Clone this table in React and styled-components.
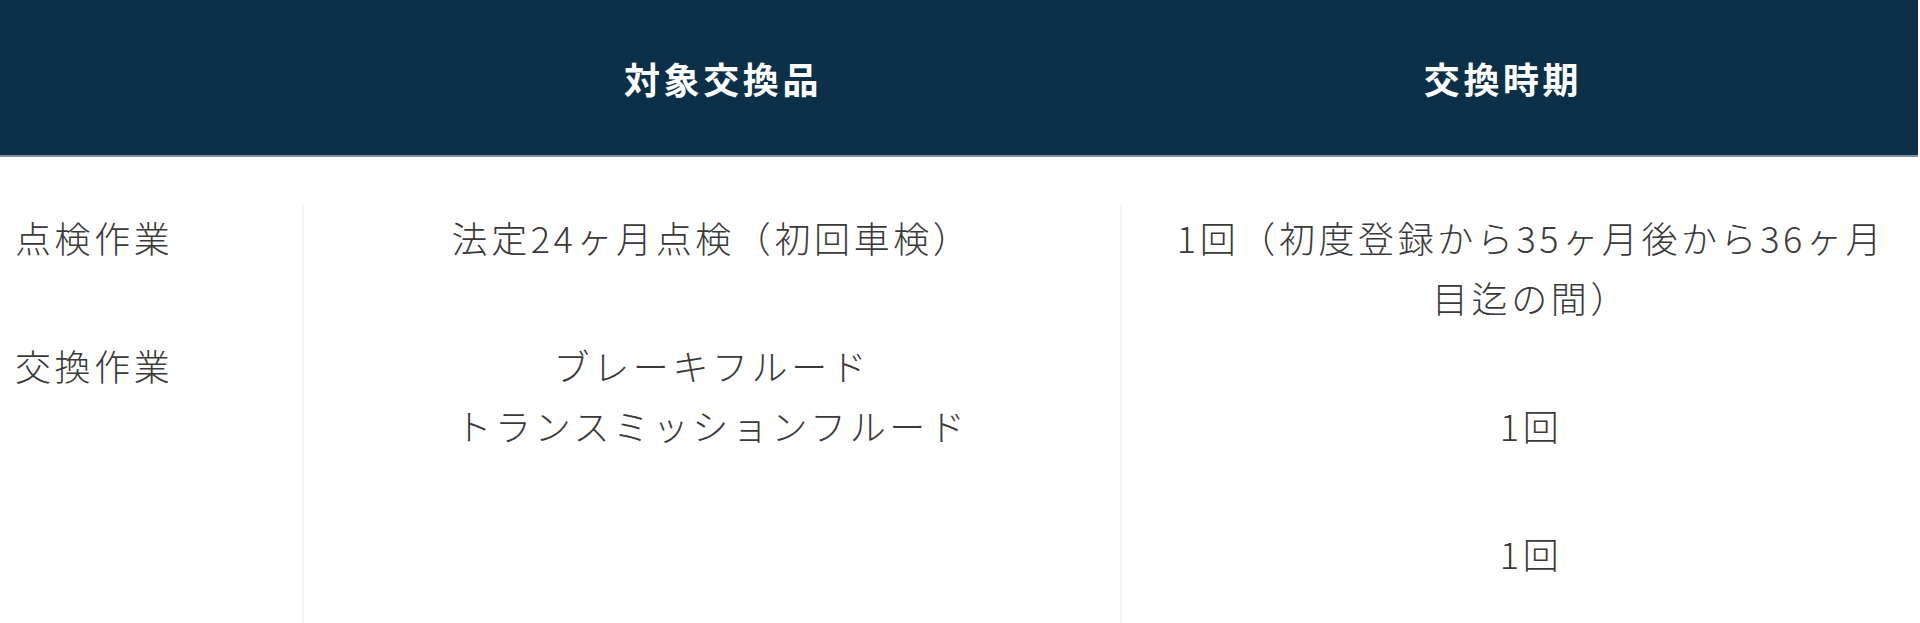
import React from 'react';
import styled, { createGlobalStyle } from 'styled-components';

const GlobalStyle = createGlobalStyle`
  html, body {
    margin: 0;
    padding: 0;
    background: #ffffff;
  }
  body {
    font-family: "Noto Sans CJK JP", "Noto Sans", sans-serif;
    color: #333333;
  }
`;

const Table = styled.section`
  width: 100%;
  min-height: 623px;
  display: flex;
  flex-direction: column;
`;

const HeadRow = styled.div`
  display: grid;
  grid-template-columns: 302px 818px 1fr;
  align-items: center;
  height: 155px;
  background-color: #0d3049;
  border-bottom: 2px solid #7e90a3;
  margin-right: 2px;
`;

const HeadCell = styled.div`
  color: #ffffff;
  font-size: 36px;
  font-weight: 700;
  letter-spacing: 0.1em;
  text-align: center;
  padding-left: ${(p) => p.$left || 0}px;
  padding-right: ${(p) => p.$right || 0}px;
`;

const Body = styled.div`
  flex: 1;
  display: grid;
  grid-template-columns: 302px 818px 1fr;
  margin-top: 48px;
`;

const Column = styled.div`
  display: flex;
  flex-direction: column;
  gap: 68px;
  padding-top: 2px;
  padding-left: ${(p) => p.$indent || 0}px;
  border-left: ${(p) => (p.$label ? 'none' : '2px solid #f3f3f3')};
  text-align: ${(p) => (p.$label ? 'left' : 'center')};
`;

const Item = styled.p`
  margin: 0;
  font-size: 36px;
  font-weight: 300;
  line-height: 60px;
  letter-spacing: 0.1em;
  color: #3a3a3a;
`;

const rows = {
  labels: ['点検作業', '交換作業'],
  items: [['法定24ヶ月点検（初回車検）'], ['ブレーキフルード', 'トランスミッションフルード']],
  periods: [['1回（初度登録から35ヶ月後から36ヶ月', '目迄の間）'], ['1回'], ['1回']],
};

const Lines = ({ lines }) => (
  <Item>
    {lines.map((line, i) => (
      <React.Fragment key={i}>
        {i > 0 && <br />}
        {line}
      </React.Fragment>
    ))}
  </Item>
);

export default function App() {
  return (
    <>
      <GlobalStyle />
      <Table>
        <HeadRow>
          <HeadCell />
          <HeadCell $left={24}>対象交換品</HeadCell>
          <HeadCell $right={32}>交換時期</HeadCell>
        </HeadRow>
        <Body>
          <Column $label $indent={15}>
            {rows.labels.map((label) => (
              <Item key={label}>{label}</Item>
            ))}
          </Column>
          <Column>
            {rows.items.map((lines, i) => (
              <Lines key={i} lines={lines} />
            ))}
          </Column>
          <Column $indent={20}>
            {rows.periods.map((lines, i) => (
              <Lines key={i} lines={lines} />
            ))}
          </Column>
        </Body>
      </Table>
    </>
  );
}
